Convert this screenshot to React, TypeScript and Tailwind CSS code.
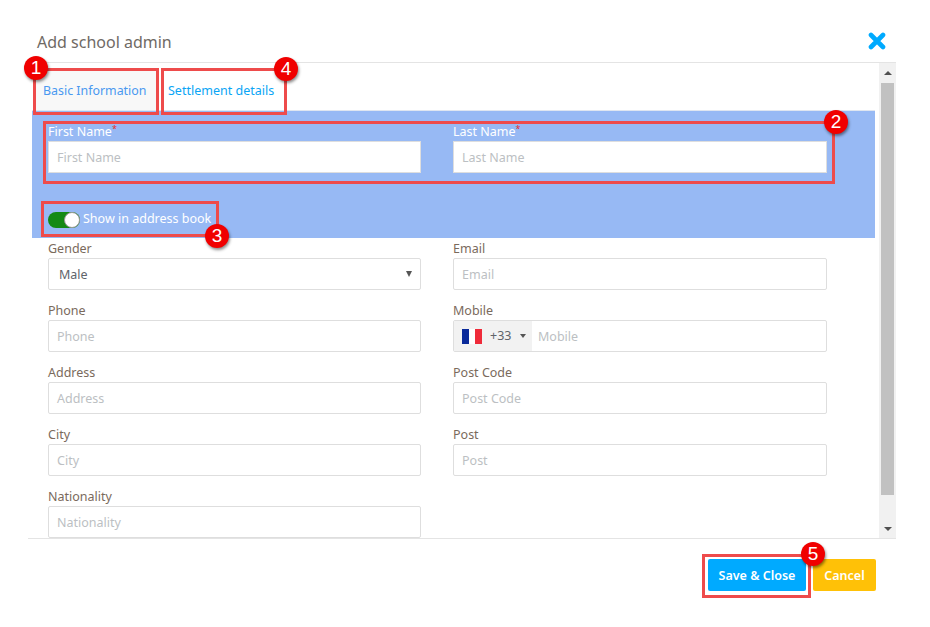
const font = "font-['Noto_Sans','Open_Sans',sans-serif]";

function Field({ label, placeholder }: { label: string; placeholder: string }) {
  return (
    <div className="h-[62px]">
      <div className="h-[17px] text-[12.5px] leading-[17px] text-[#7a6a5c]">{label}</div>
      <div className="mt-[1px] flex h-[32px] items-center rounded-[2px] border border-[#dedede] bg-white px-2 pt-[2px] text-[12.5px] text-[#bcbfc3]">
        {placeholder}
      </div>
    </div>
  );
}

function Annot({ n, box, badge }: { n: number; box: string; badge: string }) {
  return (
    <>
      <div className={`absolute border-[3px] border-[#ee4b4b] ${box}`} />
      <div
        className={`absolute flex h-6 w-6 items-center justify-center rounded-full bg-[#f00000] font-['Liberation_Sans',sans-serif] text-[19px] text-white shadow-[1px_2px_3px_rgba(0,0,0,0.45)] ${badge}`}
      >
        {n}
      </div>
    </>
  );
}

export default function App() {
  return (
    <div className={`relative h-[627px] w-[930px] overflow-hidden bg-white ${font}`}>
      <div className="ml-[28px] w-[868px] pt-[28px]">
        {/* header */}
        <div className="flex h-[35px] items-start justify-between border-b border-[#e4e4e4] pl-[9px] pr-[10px]">
          <div className="text-[16px] leading-[28px] text-[#6f6a65]">Add school admin</div>
          <svg width="18" height="18" viewBox="0 0 18 18" className="mt-[4px]">
            <path d="M3 3 L15 15 M15 3 L3 15" stroke="#00aaff" strokeWidth="4.6" strokeLinecap="round" />
          </svg>
        </div>

        {/* body */}
        <div className="flex h-[476px] border-b border-[#e4e4e4]">
          <div className="w-[851px] overflow-hidden pl-[4px] pr-[4px]">
            <div className="flex h-[47px] pl-[3px] pt-[8px]">
              <div className="flex w-[122px] items-center bg-[#f8f8f8] pl-[8px] pt-[2px] text-[12.4px] text-[#4a98f0]">Basic Information</div>
              <div className="ml-[3px] flex w-[124px] items-center pl-[8px] pt-[2px] text-[12.5px] text-[#0aa5f5]">Settlement details</div>
            </div>
            <div className="h-[128px] border-t border-[#dfe6f0] bg-[#97b9f4] px-[16px] pt-[12px]">
              <div className="grid grid-cols-[373px_374px] gap-x-[32px]">
                <div>
                  <div className="h-[18px] text-[12.5px] leading-[17px] text-white">
                    First Name<span className="align-top text-[9px] leading-[12px] text-[#e03030]">*</span>
                  </div>
                  <div className="flex h-[32px] items-center border border-[#dedede] bg-white px-2 pt-[2px] text-[12.5px] text-[#bcbfc3]">First Name</div>
                </div>
                <div>
                  <div className="h-[18px] text-[12.5px] leading-[17px] text-white">
                    Last Name<span className="align-top text-[9px] leading-[12px] text-[#e03030]">*</span>
                  </div>
                  <div className="flex h-[32px] items-center border border-[#dedede] bg-white px-2 pt-[2px] text-[12.5px] text-[#bcbfc3]">Last Name</div>
                </div>
              </div>
              <div className="mt-[37px] flex items-center text-[12.5px] text-white">
                <div className="relative mt-[2px] h-4 w-[32px] rounded-full bg-[#148a14]">
                  <div className="absolute right-0 top-0 h-4 w-4 rounded-full border border-[#999] bg-white" />
                </div>
                <span className="ml-[3px]">Show in address book</span>
              </div>
            </div>

            <div className="grid grid-cols-[373px_374px] gap-x-[32px] px-[16px] pt-[2px]">
              <div className="h-[62px]">
                <div className="h-[17px] text-[12.5px] leading-[17px] text-[#7a6a5c]">Gender</div>
                <div className="mt-[1px] flex h-[32px] items-center justify-between rounded-[2px] border border-[#dedede] bg-white pl-[10px] pr-[8px] pt-[3px] text-[12.5px] text-[#60646a]">
                  Male
                  <span className="mb-[3px] h-0 w-0 border-x-[3.5px] border-t-[6px] border-x-transparent border-t-[#555]" />
                </div>
              </div>
              <Field label="Email" placeholder="Email" />
              <Field label="Phone" placeholder="Phone" />
              <div className="h-[62px]">
                <div className="h-[17px] text-[12.5px] leading-[17px] text-[#7a6a5c]">Mobile</div>
                <div className="mt-[1px] flex h-[32px] items-center rounded-[2px] border border-[#dedede] bg-white text-[12.5px]">
                  <div className="flex h-full w-[78px] items-center bg-[#f2f2f2] pl-[8px] text-[#60646a]">
                    <span className="flex h-[15px] w-[20px]">
                      <span className="w-1/3 bg-[#0a2a9a]" />
                      <span className="w-1/3 bg-white" />
                      <span className="w-1/3 bg-[#ef2b3a]" />
                    </span>
                    <span className="ml-[8px] pt-[1px]">+33</span>
                    <span className="ml-[9px] h-0 w-0 border-x-[3px] border-t-[4px] border-x-transparent border-t-[#555]" />
                  </div>
                  <span className="ml-[6px] pt-[2px] text-[#bcbfc3]">Mobile</span>
                </div>
              </div>
              <Field label="Address" placeholder="Address" />
              <Field label="Post Code" placeholder="Post Code" />
              <Field label="City" placeholder="City" />
              <Field label="Post" placeholder="Post" />
              <Field label="Nationality" placeholder="Nationality" />
            </div>
          </div>

          {/* scrollbar */}
          <div className="flex w-[17px] flex-col items-center bg-[#f1f1f1]">
            <div className="flex h-[20px] w-full items-center justify-center">
              <span className="h-0 w-0 border-x-[4px] border-b-[4px] border-x-transparent border-b-[#505050]" />
            </div>
            <div className="h-[412px] w-[13px] bg-[#c1c1c1]" />
            <div className="flex flex-1 items-end justify-center pb-[7px]">
              <span className="h-0 w-0 border-x-[4px] border-t-[4px] border-x-transparent border-t-[#505050]" />
            </div>
          </div>
        </div>

        {/* footer */}
        <div className="flex justify-end gap-[7px] pr-[20px] pt-[20px] text-[12.5px] font-semibold text-white">
          <button className="h-[32px] w-[98px] rounded-[2px] bg-[#00aaff] pt-[2px]">Save &amp; Close</button>
          <button className="h-[32px] w-[63px] rounded-[2px] bg-[#ffc107] pt-[2px]">Cancel</button>
        </div>
      </div>

      {/* annotations drawn over the screenshot */}
      <Annot n={1} box="left-[33px] top-[68px] h-[47px] w-[126px]" badge="left-[24px] top-[56px]" />
      <Annot n={4} box="left-[161px] top-[68px] h-[47px] w-[126px]" badge="left-[274px] top-[57px]" />
      <Annot n={2} box="left-[43px] top-[121px] h-[63px] w-[792px]" badge="left-[824px] top-[110px]" />
      <Annot n={3} box="left-[41px] top-[201px] h-[36px] w-[178px]" badge="left-[205px] top-[224px]" />
      <Annot n={5} box="left-[702px] top-[554px] h-[44px] w-[109px]" badge="left-[801px] top-[542px]" />
    </div>
  );
}
